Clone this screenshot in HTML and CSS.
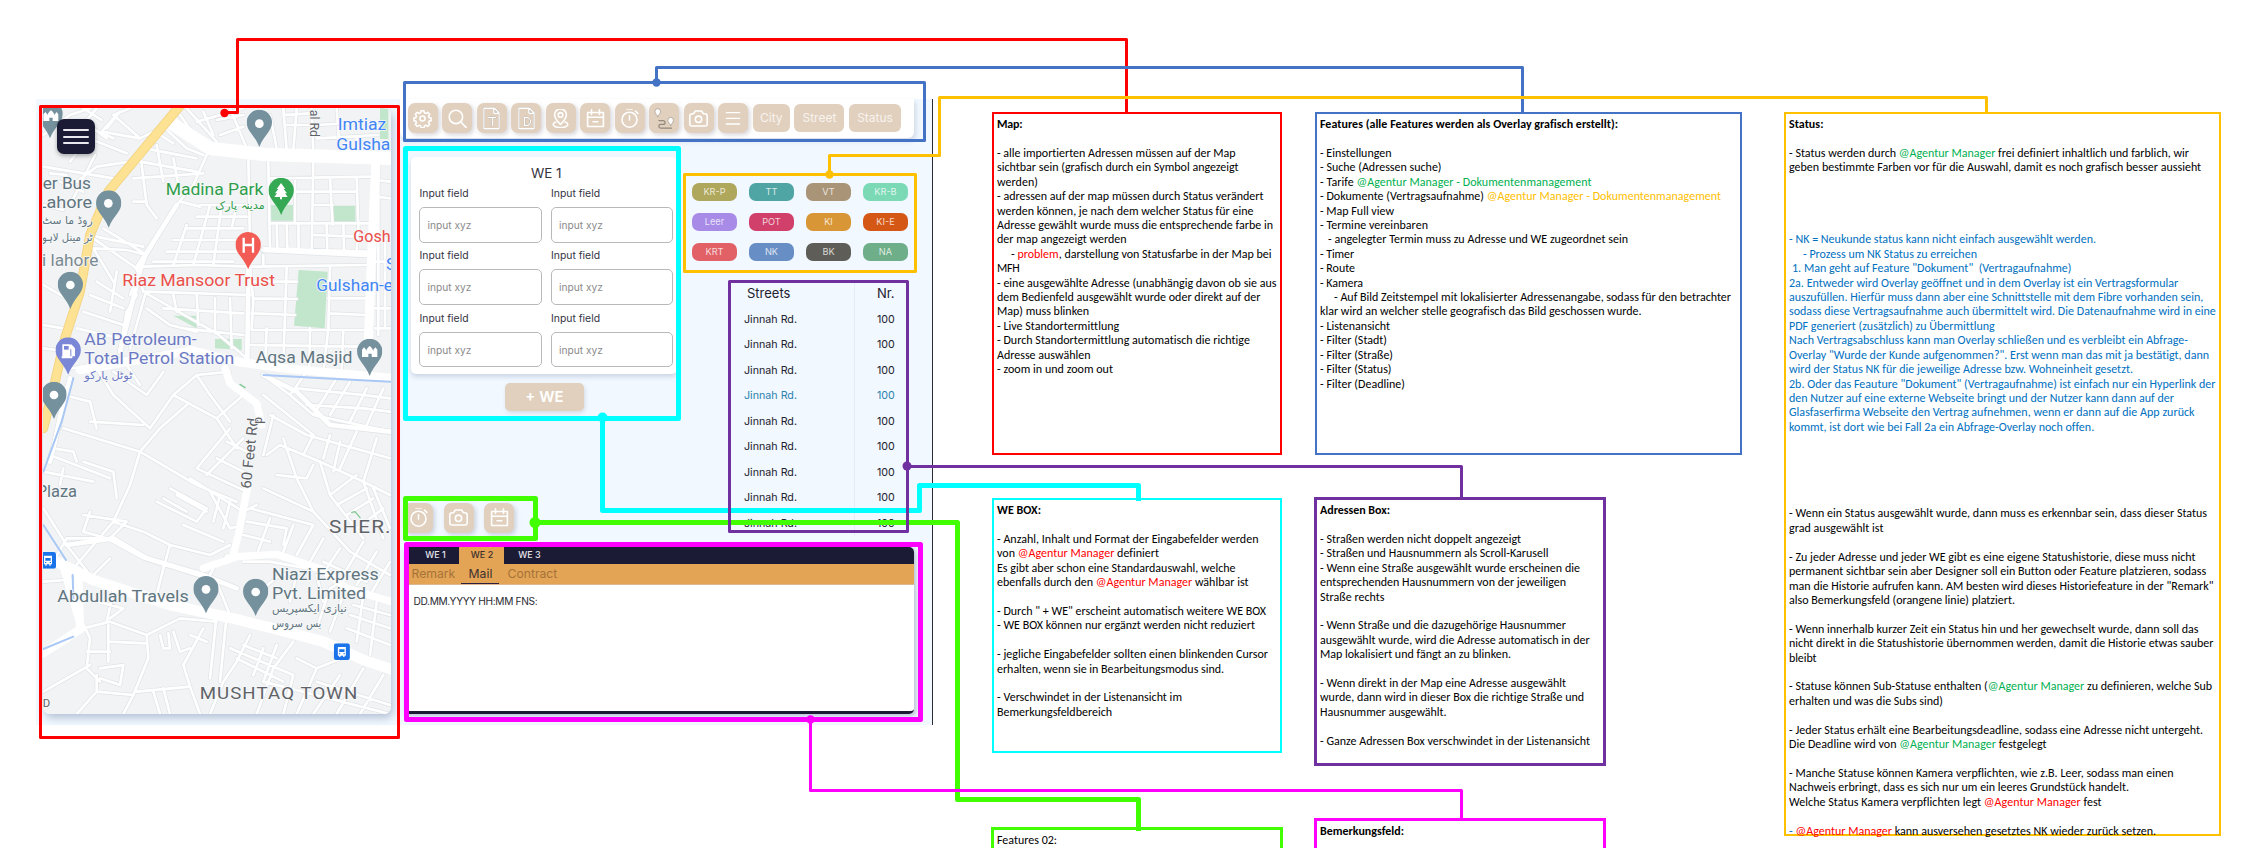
FILE: index.html
```html
<!DOCTYPE html>
<html lang="de">
<head>
<meta charset="utf-8">
<title>Bedienfeld – Anmerkungen</title>
<link rel="stylesheet" href="styles.css">
</head>
<body>
<svg class="defs" width="0" height="0" aria-hidden="true">
  <symbol id="i-gear" viewBox="0 0 24 24"><circle cx="12" cy="12" r="3.2"/><path d="M10.200 2.200h3.600l.6 2.700 1.800.8 2.400-1.500 2.500 2.500-1.500 2.400.8 1.800 2.500.6v3.200l-2.500.6-.8 1.800 1.500 2.400-2.500 2.500-2.400-1.500-1.800.8-.6 2.500h-3.600l-.6-2.500-1.800-.8-2.400 1.500-2.500-2.500 1.500-2.400-.8-1.800-2.500-.6v-3.200l2.500-.6.8-1.800-1.500-2.400 2.500-2.500 2.400 1.500 1.800-.8z"/></symbol>
  <symbol id="i-search" viewBox="0 0 24 24"><circle cx="10" cy="10" r="8.500"/><path d="M16 16 23 23.500"/></symbol>
  <symbol id="i-docT" viewBox="0 0 18 24"><path d="M1 1h11l5 5v17H1zM11.500 1v5.500H17"/><path class="glyph" d="M6 11h7.500M9.800 11v8.500"/></symbol>
  <symbol id="i-docD" viewBox="0 0 18 24"><path d="M1 1h11l5 5v17H1zM11.500 1v5.500H17"/><path class="glyph" d="M7 11v8.500h2a4.200 4.200 0 0 0 0-8.500z"/></symbol>
  <symbol id="i-pin" viewBox="0 0 24 24"><path d="M12 19.500C7.500 15 4.500 11.500 4.500 7.300a7.500 7.500 0 0 1 15 0c0 4.200-3 7.700-7.500 12.200z"/><circle cx="12" cy="7.500" r="2.900"/><path d="M6 16.500C.5 18.500 2 23.500 12 23.500s11.500-5 6-7"/></symbol>
  <symbol id="i-cal" viewBox="0 0 24 24"><path d="M2 4.500h20v17.500H2zM2 10.500h20M7 1v6M17 1v6M9 16h6"/></symbol>
  <symbol id="i-timer" viewBox="0 0 24 24"><circle cx="12" cy="13.500" r="9.500"/><path d="M12 8.500v5.500M8.500 0h7M19.500 2.500l3 3"/></symbol>
  <symbol id="i-route" viewBox="0 0 24 24"><path class="ghost" d="M6 14.500h5a2.300 2.300 0 0 1 0 4.600H8a2.200 2.200 0 0 0 0 4.400h13"/><path class="solid" d="M4.500 9.500C2 6.500 1.200 5 1.200 3.500a3.300 3.300 0 0 1 6.600 0c0 1.500-.8 3-3.300 6zM20 20c-2.500-3-3.300-4.500-3.300-6a3.300 3.300 0 0 1 6.600 0c0 1.500-.8 3-3.300 6z"/></symbol>
  <symbol id="i-cam" viewBox="0 0 24 24"><path d="M8 2.500h8l2.200 3.500H20a3 3 0 0 1 3 3v10a2.500 2.500 0 0 1-2.500 2.500h-17A2.500 2.500 0 0 1 1 19V9a3 3 0 0 1 3-3h1.800z"/><circle cx="12" cy="13" r="4"/></symbol>
  <symbol id="i-menu" viewBox="0 0 24 24"><path d="M2 4h20M2 12.500h20M2 21h20"/></symbol>
  <symbol id="marker" viewBox="0 0 76 112"><path d="M38 0a38 38 0 0 1 38 38c0 27-24 38-38 74C24 76 0 65 0 38A38 38 0 0 1 38 0z"/></symbol>
  <symbol id="bus" viewBox="0 0 48 50"><rect width="48" height="50" rx="7" fill="#1a73e8"/><path fill="#fff" d="M12 11h24v26h-4v4h-4v-4h-8v4h-4v-4h-4z"/><path fill="#1a73e8" d="M16 18h16v8H16zM15 30h4v3h-4zM29 30h4v3h-4z"/></symbol>
</svg>

<main class="board">
  <section class="app">
    <div class="map">
      <svg class="map-svg" viewBox="39 39 1043 1818" preserveAspectRatio="none">
        <defs>
          <g id="minor">
            <path d="M40 120 120 60 180 40M200 40 150 100M260 60 215 110M215 110 330 130 400 95M120 200 175 130 290 175M140 260 200 215 300 200M60 235 110 240M40 330 100 345M195 180 120 330M90 260 160 290M40 215 250 250"/>
            <path d="M330 130 250 60 300 40M180 100 250 130M230 100 270 50M160 40 215 75"/>
            <path d="M400 95 470 160 520 180M375 110 430 145M345 160 500 190M330 200 500 230M330 170 350 330 380 370M380 150 400 260M430 190 445 270M310 320 350 320M310 250 520 235M530 180 490 270 440 330 350 480 300 600"/>
            <path d="M450 60 500 130M470 40 560 140M520 50 550 120M500 80 640 40M560 75 640 60M600 40 650 160M570 120 640 95M720 60 740 160M760 40 770 165M800 40 790 165M845 40 850 180M760 60 840 55M765 90 845 90M860 90 1045 80M860 130 1045 120M920 40 930 180M980 130 985 180"/>
            <path d="M655 190 660 460 655 520 650 800M715 200 718 380 720 460M850 190 845 470M715 250 1020 245M980 250 985 400 980 465M900 250 908 390M795 250 795 380M720 290 850 290M850 290 980 290M850 330 908 330M720 385 1020 385M740 385 742 460M770 385 772 460M805 385 806 465M850 420 980 425M890 390 892 460M940 385 942 465M340 515 500 510 660 515 1010 510M700 460 1010 470"/>
            <path d="M510 330 650 330M500 365 650 365M470 400 640 400M430 435 620 435M410 470 620 470M370 500 610 500M575 330 550 510M540 330 490 510M620 330 605 400M470 390 430 510M450 320 510 335"/>
            <path d="M660 515 670 620 665 700M770 515 760 800M700 480 700 515M900 515 895 700 880 830M895 560 1010 565M895 610 1010 610M895 655 1010 660M895 705 1010 705M670 560 800 560M670 610 800 612M665 655 795 660M665 705 1010 705M660 750 1000 755M710 700 705 810M840 700 838 820M940 705 935 820"/>
            <path d="M350 480 290 465 190 460 250 560M200 425 340 455M220 400 350 480M190 430 320 520M320 520 340 590 560 715 650 790M345 590 660 600M500 600 505 690M430 600 440 650M400 640 640 655M460 700 640 720M555 610 555 715M600 610 605 760M350 640 420 690 500 710M320 600 290 650 270 760M345 600 300 760M280 610 200 560M260 530 240 650M180 600 280 640M160 650 280 690M140 700 270 730"/>
            <path d="M190 100 230 130M1080 260 1040 255M1080 310 1040 305M1080 430 1040 430M1080 500 1040 500M1080 640 1035 640M1080 700 1035 700M1045 200 1045 720M1065 430 1065 700"/>
            <path d="M40 570 110 610M40 690 100 700M40 760 80 765M120 820 220 810 230 780M120 850 100 900 60 1100M100 900 180 920 200 1000M200 820 250 900 360 1000M250 830 350 900 400 830M290 810 330 870M360 1000 430 900 500 840 600 830M430 900 560 970 620 1060M500 840 540 900 600 980M560 970 640 900M470 930 390 1000 330 1070M100 1000 330 1070 500 1170 620 1220M180 980 340 990"/>
            <path d="M700 840 780 900 850 960 1080 1010M780 900 830 830M850 960 920 850M900 960 960 860M960 980 1010 880M1010 990 1060 880M700 900 850 1020M720 960 830 1020 1080 1090M800 880 1000 900 1080 910M830 930 1000 940 1080 950"/>
            <path d="M500 1120 600 1000M530 1140 640 1030M500 1120 650 1190M480 1150 640 1250 680 1230M560 1090 660 1140M590 1040 670 1080M540 1190 600 1300 640 1290M570 1200 550 1280M600 1220 580 1300"/>
            <path d="M710 1080 750 1050 870 1100 1000 1160 1080 1200M740 1140 830 1150 850 1110M760 1030 800 1150 850 1250 960 1370M700 1180 850 1250M870 1100 900 1200 1000 1330M930 1040 910 1130M980 1010 930 1120M1040 1030 1000 1160M900 1200 980 1140M920 1230 1010 1180M950 1260 1030 1210M980 1300 1060 1240M1000 1160 1060 1330M1030 1180 1080 1300M730 960 700 1080M850 1020 820 1080M900 1020 880 1090"/>
            <path d="M660 1240 850 1290M650 1280 770 1300 760 1350M640 1320 720 1340M720 1270 680 1380M790 1290 760 1370M850 1290 800 1380M880 1330 840 1400M930 1360 890 1420M960 1370 1080 1440M1000 1340 940 1440M1040 1370 980 1470M1080 1400 1020 1500M880 1400 1010 1460"/>
            <path d="M60 1080 240 1150M70 1060 130 1070 140 1100M40 1130 190 1160M100 1120 90 1170M160 1100 250 1130 260 1210M330 1070 300 1170 250 1280 130 1420M160 1260 290 1280 240 1330M180 1250 160 1310 230 1330M110 1330 230 1330 340 1390 530 1450M40 1240 110 1350 180 1440M250 1280 340 1310 420 1350 400 1420 380 1500M380 1220 500 1280 530 1240 420 1180M400 1210 470 1250M440 1200 530 1250M420 1350 540 1380 600 1350M460 1290 580 1340M70 1400 110 1330"/>
            <path d="M180 1450 240 1390M520 1480 560 1400 620 1380M500 1430 560 1460 600 1560M640 1400 720 1400 830 1420M700 1480 750 1440 830 1430M800 1440 780 1520M860 1440 880 1520M560 1560 540 1750M590 1560 570 1760"/>
            <path d="M40 1460 110 1455M120 1500 180 1630 170 1720 210 1760M200 1520 280 1540 240 1570M250 1490 230 1580M160 1600 240 1580 350 1620 450 1570 560 1580M350 1620 355 1690 310 1800 280 1857M235 1590 235 1700M235 1640 350 1645M170 1670 240 1670M210 1720 280 1710 270 1770 210 1750M310 1800 200 1790 140 1857M200 1790 200 1740M320 1790 480 1775 460 1710 520 1600M390 1620 400 1660 420 1660 415 1615M430 1610 450 1670 480 1660M480 1620 530 1640M40 1790 180 1710"/>
            <path d="M600 1660 790 1740M620 1690 760 1760M640 1650 740 1690M660 1620 620 1700 580 1760 540 1857M700 1660 670 1740M740 1650 700 1760M790 1640 730 1720 680 1857M790 1740 760 1857M700 1760 1080 1857M800 1690 860 1720 960 1680M860 1720 800 1857M930 1740 850 1857M1000 1720 920 1857M1060 1740 990 1857M860 1760 1080 1830M480 1775 510 1857M400 1780 420 1857M370 1790 390 1857"/>
            <path d="M860 1600 900 1480 950 1450M900 1610 940 1500M960 1560 1080 1600M950 1600 1080 1650M970 1530 1080 1560M1000 1500 980 1640M1040 1520 1020 1680"/>
          </g>
          <g id="mid">
            <path d="M655 520 652 800M1010 480 700 465M340 490 270 770M440 330 320 520M150 820 300 790 500 765"/>
            <path d="M60 1100 120 850M110 1350 250 1330 350 1390 520 1440 620 1480M590 1385 760 1380M700 840 800 890 900 990 1080 1010"/>
          </g>
        </defs>
        <rect x="39" y="39" width="1043" height="1818" fill="#f1f3f4"/>
        <g fill="#c1e6cb">
          <path d="M717 330h78v47h-78zM908 332h68v50h-68zM806 525l87 5-9 170-92-8zM430 662h70v38zM555 732h80v33l-80-5zM1050 40h25v92h-25z"/>
        </g>
        <use href="#minor" class="road casing-minor"/>
        <use href="#mid" class="road casing-mid"/>
        <use href="#minor" class="road line-minor"/>
        <use href="#mid" class="road line-mid"/>
        <path class="road" stroke="#fff" stroke-width="40" d="M425 85 540 160 700 178 1090 190"/>
        <path class="road" stroke="#fff" stroke-width="27" d="M1038 190 1025 480 1015 740"/>
        <path class="road" stroke="#fff" stroke-width="26" d="M480 765 620 800 780 822 1090 850M150 825 480 768"/>
        <path class="road" stroke="#fff" stroke-width="22" d="M585 820 600 865 680 925 695 990M652 1180 625 1320 608 1385M520 1420 620 1385 740 1378 880 1425 950 1480 1085 1520"/>
        <path class="road" stroke="#fff" stroke-width="32" d="M80 1400 190 1455 420 1530 600 1568 720 1598 880 1640 1000 1695 1090 1725"/>
        <path class="road" stroke="#fff" stroke-width="25" d="M100 1410 155 1600 40 1675M145 1450 150 1600"/>
        <path class="road" stroke="#a9c8f5" stroke-width="6" d="M130 850 95 980 40 1130M40 1290 108 1395M128 1440 130 1510M40 1662 130 1625M700 840 880 850 1082 860"/>
        <path class="road" stroke="#f3d27e" stroke-width="29" d="M460 20 235 290 180 420 150 590 105 730 75 860 40 1000"/>
        <path class="road" stroke="#fde293" stroke-width="24" d="M460 20 235 290 180 420 150 590 105 730 75 860 40 1000"/>
        <path class="road" stroke="#81c995" stroke-width="4" d="M630 868 645 878M965 1252 975 1250 990 1268"/>

        <g fill="#76919e">
          <use href="#marker" x="20" y="18" width="80" height="112"/>
          <use href="#marker" x="650" y="44" width="76" height="112"/>
          <use href="#marker" x="198" y="286" width="76" height="112"/>
          <use href="#marker" x="83" y="530" width="76" height="112"/>
          <use href="#marker" x="34" y="860" width="76" height="112"/>
          <use href="#marker" x="981" y="731" width="76" height="112"/>
          <use href="#marker" x="490" y="1443" width="76" height="112"/>
          <use href="#marker" x="639" y="1451" width="76" height="112"/>
        </g>
        <g fill="#fff">
          <circle cx="688" cy="86" r="13"/><circle cx="235" cy="325" r="13"/><circle cx="121" cy="570" r="13"/><circle cx="72" cy="900" r="13"/><circle cx="528" cy="1483" r="13"/><circle cx="677" cy="1491" r="13"/>
          <path d="M996 786v-22l6-7 6 7v5c2-8 6-12 11-16 5 4 9 8 11 16v-5l6-7 6 7v22h-17v-10h-10v10zM40 78V58l6-7 6 7v4c2-8 6-12 11-16 5 4 9 8 11 16v-4l6-7 5 7v20H68V68H58v10z"/>
        </g>
        <use href="#marker" x="715" y="248" width="77" height="112" fill="#34a853"/>
        <path fill="#fff" d="M753 264l13 18h-5l10 13h-6l8 11h-17v7h-6v-7h-17l8-11h-6l10-13h-5z"/>
        <use href="#marker" x="616" y="411" width="77" height="112" fill="#f25c54"/>
        <path fill="none" stroke="#fff" stroke-width="7" d="M641 428v45M669 428v45M641 450h28"/>
        <use href="#marker" x="76" y="727" width="77" height="112" fill="#7a86d6"/>
        <path fill="#fff" d="M97 748h24v36h3V764l-4-5v-8l4-3 11 12v24h-8v6H95v-6h2z"/><path fill="#7a86d6" d="M102 753h14v11h-14z"/>
        <use href="#bus" x="30" y="1371" width="48" height="50"/>
        <use href="#bus" x="911" y="1645" width="49" height="50"/>

        <g class="lbl">
          <g fill="#4285f4">
            <text x="923" y="106" textLength="146" lengthAdjust="spacingAndGlyphs">Imtiaz</text>
            <text x="919" y="164" textLength="162" lengthAdjust="spacingAndGlyphs">Gulsha</text>
            <text x="1068" y="526">S</text>
            <text x="859" y="587" textLength="230" lengthAdjust="spacingAndGlyphs">Gulshan-e</text>
          </g>
          <g fill="#2f9e4c"><text x="407" y="300" textLength="293" lengthAdjust="spacingAndGlyphs">Madina Park</text><text class="ar" x="556" y="342" textLength="148" lengthAdjust="spacingAndGlyphs">مدینہ پارک</text></g>
          <g fill="#ea4f4a"><text x="277" y="574" textLength="458" lengthAdjust="spacingAndGlyphs">Riaz Mansoor Trust</text><text x="970" y="441" textLength="112" lengthAdjust="spacingAndGlyphs">Gosh</text></g>
          <g fill="#60757f">
            <text x="38" y="281" textLength="145" lengthAdjust="spacingAndGlyphs">er Bus</text>
            <text x="20" y="338" textLength="166" lengthAdjust="spacingAndGlyphs">Lahore</text>
            <text class="ar" x="36" y="388" textLength="152" lengthAdjust="spacingAndGlyphs">روڈ ما سٹ</text>
            <text class="ar" x="36" y="438" textLength="152" lengthAdjust="spacingAndGlyphs">ٹر مینل لاہو</text>
            <text x="36" y="513" textLength="169" lengthAdjust="spacingAndGlyphs" fill="#7b8a92">i lahore</text>
            <text x="677" y="803" textLength="290" lengthAdjust="spacingAndGlyphs">Aqsa Masjid</text>
            <text x="20" y="1247" textLength="121" lengthAdjust="spacingAndGlyphs" transform="translate(0 -40)">Plaza</text>
            <text x="82" y="1520" textLength="394" lengthAdjust="spacingAndGlyphs">Abdullah Travels</text>
            <text x="726" y="1454" textLength="320" lengthAdjust="spacingAndGlyphs">Niazi Express</text>
            <text x="726" y="1512" textLength="282" lengthAdjust="spacingAndGlyphs">Pvt. Limited</text>
            <text class="ar" x="726" y="1552" textLength="224" lengthAdjust="spacingAndGlyphs">نیازی ایکسپریس</text>
            <text class="ar" x="726" y="1596" textLength="148" lengthAdjust="spacingAndGlyphs">بس سروس</text>
          </g>
          <g fill="#6b78c4">
            <text x="163" y="751" textLength="337" lengthAdjust="spacingAndGlyphs">AB Petroleum-</text>
            <text x="163" y="808" textLength="450" lengthAdjust="spacingAndGlyphs">Total Petrol Station</text>
            <text class="ar" x="163" y="852" textLength="144" lengthAdjust="spacingAndGlyphs">ٹوٹل پارکو</text>
          </g>
          <g fill="#5f6368">
            <text class="area" x="897" y="1313" textLength="188" lengthAdjust="spacingAndGlyphs">SHER.</text>
            <text class="area area-sm" x="509" y="1812" textLength="476" lengthAdjust="spacingAndGlyphs">MUSHTAQ TOWN</text>
            <text class="tiny" x="38" y="1836">D</text>
            <text class="rd" transform="translate(662 1182) rotate(-84)" textLength="212" lengthAdjust="spacingAndGlyphs">60 Feet Rd</text>
            <text class="rd rd-sm" transform="translate(841 44) rotate(90)" textLength="82" lengthAdjust="spacingAndGlyphs">al Rd</text>
            <text class="rd rd-sm" transform="translate(676 966) rotate(90)">d</text>
          </g>
        </g>
      </svg>
      <button class="burger"><i></i><i></i><i></i></button>
    </div>

    <div class="main">
      <div class="toolbar">
        <span class="tb"><svg class="ic"><use href="#i-gear"/></svg></span>
        <span class="tb"><svg class="ic"><use href="#i-search"/></svg></span>
        <span class="tb"><svg class="ic doc"><use href="#i-docT"/></svg></span>
        <span class="tb"><svg class="ic doc"><use href="#i-docD"/></svg></span>
        <span class="tb"><svg class="ic"><use href="#i-pin"/></svg></span>
        <span class="tb"><svg class="ic"><use href="#i-cal"/></svg></span>
        <span class="tb"><svg class="ic"><use href="#i-timer"/></svg></span>
        <span class="tb"><svg class="ic route"><use href="#i-route"/></svg></span>
        <span class="tb"><svg class="ic"><use href="#i-cam"/></svg></span>
        <span class="tb"><svg class="ic small"><use href="#i-menu"/></svg></span>
        <span class="filter f-city">City</span><span class="filter f-street">Street</span><span class="filter f-status">Status</span>
      </div>
      <div class="middle">
        <div class="left">
          <div class="card">
            <h2>WE 1</h2>
            <div class="fields">
              <label>Input field<span>input xyz</span></label><label>Input field<span>input xyz</span></label>
              <label>Input field<span>input xyz</span></label><label>Input field<span>input xyz</span></label>
              <label>Input field<span>input xyz</span></label><label>Input field<span>input xyz</span></label>
            </div>
          </div>
          <span class="add">+ WE</span>
          <div class="quick">
            <span class="tb"><svg class="ic"><use href="#i-timer"/></svg></span>
            <span class="tb"><svg class="ic"><use href="#i-cam"/></svg></span>
            <span class="tb"><svg class="ic"><use href="#i-cal"/></svg></span>
          </div>
        </div>
        <div class="right">
          <div class="pills">
            <span class="krp">KR-P</span><span class="tt">TT</span><span class="vt">VT</span><span class="krb">KR-B</span>
            <span class="leer">Leer</span><span class="pot">POT</span><span class="ki">KI</span><span class="kie">KI-E</span>
            <span class="krt">KRT</span><span class="nk">NK</span><span class="bk">BK</span><span class="na">NA</span>
          </div>
          <div class="streets">
            <b>Streets</b><b>Nr.</b>
            <span>Jinnah Rd.</span><span>100</span>
            <span>Jinnah Rd.</span><span>100</span>
            <span>Jinnah Rd.</span><span>100</span>
            <span class="on">Jinnah Rd.</span><span class="on">100</span>
            <span>Jinnah Rd.</span><span>100</span>
            <span>Jinnah Rd.</span><span>100</span>
            <span>Jinnah Rd.</span><span>100</span>
            <span>Jinnah Rd.</span><span>100</span>
            <span>Jinnah Rd.</span><span>100</span>
          </div>
        </div>
      </div>
      <div class="remark">
        <div class="tabs"><span>WE 1</span><span class="on">WE 2</span><span>WE 3</span></div>
        <div class="subtabs"><span class="s1">Remark</span><span class="s2 on">Mail</span><span class="s3">Contract</span></div>
        <div class="entry">DD.MM.YYYY HH:MM FNS:</div>
      </div>
    </div>
  </section>

  <article class="note n-map">
    <p data-w="25.500"><b>Map:</b></p><p></p>
    <p data-w="238.500">- alle importierten Adressen müssen auf der Map</p>
    <p data-w="241.500">sichtbar sein (grafisch durch ein Symbol angezeigt</p>
    <p data-w="41">werden)</p>
    <p data-w="266.500">- adressen auf der map müssen durch Status verändert</p>
    <p data-w="256.500">werden können, je nach dem welcher Status für eine</p>
    <p data-w="276">Adresse gewählt wurde muss die entsprechende farbe in</p>
    <p data-w="129.500">der map angezeigt werden</p>
    <p class="in" data-w="260.500">- <em class="r">problem</em>, darstellung von Statusfarbe in der Map bei</p>
    <p data-w="22.500">MFH</p>
    <p data-w="279.500">- eine ausgewählte Adresse (unabhängig davon ob sie aus</p>
    <p data-w="263.500">dem Bedienfeld ausgewählt wurde oder direkt auf der</p>
    <p data-w="92">Map) muss blinken</p>
    <p data-w="122">- Live Standortermittlung</p>
    <p data-w="252.500">- Durch Standortermittlung automatisch die richtige</p>
    <p data-w="93.500">Adresse auswählen</p>
    <p data-w="116">- zoom in und zoom out</p>
  </article>

  <article class="note n-features">
    <p data-w="298"><b>Features (alle Features werden als Overlay grafisch erstellt):</b></p><p></p>
    <p data-w="71.500">- Einstellungen</p>
    <p data-w="121.500">- Suche (Adressen suche)</p>
    <p data-w="271.500">- Tarife <em class="g">@Agentur Manager - Dokumentenmanagement</em></p>
    <p data-w="401">- Dokumente (Vertragsaufnahme) <em class="y">@Agentur Manager - Dokumentenmanagement</em></p>
    <p data-w="74">- Map Full view</p>
    <p data-w="108">- Termine vereinbaren</p>
    <p class="in-s" data-w="300">- angelegter Termin muss zu Adresse und WE zugeordnet sein</p>
    <p data-w="34">- Timer</p>
    <p data-w="35">- Route</p>
    <p data-w="43">- Kamera</p>
    <p class="in" data-w="397">- Auf Bild Zeitstempel mit lokalisierter Adressenangabe, sodass für den betrachter</p>
    <p data-w="321.500">klar wird an welcher stelle geografisch das Bild geschossen wurde.</p>
    <p data-w="70">- Listenansicht</p>
    <p data-w="67">- Filter (Stadt)</p>
    <p data-w="73">- Filter (Straße)</p>
    <p data-w="71.500">- Filter (Status)</p>
    <p data-w="85">- Filter (Deadline)</p>
  </article>

  <article class="note n-we">
    <p data-w="44"><b>WE BOX:</b></p><p></p>
    <p data-w="261.500">- Anzahl, Inhalt und Format der Eingabefelder werden</p>
    <p data-w="162">von <em class="r">@Agentur Manager</em> definiert</p>
    <p data-w="238.500">Es gibt aber schon eine Standardauswahl, welche</p>
    <p data-w="251.500">ebenfalls durch den <em class="r">@Agentur Manager</em> wählbar ist</p><p></p>
    <p data-w="269">- Durch " + WE" erscheint automatisch weitere WE BOX</p>
    <p data-w="258">- WE BOX können nur ergänzt werden nicht reduziert</p><p></p>
    <p data-w="271">- jegliche Eingabefelder sollten einen blinkenden Cursor</p>
    <p data-w="227">erhalten, wenn sie in Bearbeitungsmodus sind.</p><p></p>
    <p data-w="185">- Verschwindet in der Listenansicht im</p>
    <p data-w="115">Bemerkungsfeldbereich</p>
  </article>

  <article class="note n-addr">
    <p data-w="70"><b>Adressen Box:</b></p><p></p>
    <p data-w="201">- Straßen werden nicht doppelt angezeigt</p>
    <p data-w="228.500">- Straßen und Hausnummern als Scroll-Karusell</p>
    <p data-w="260">- Wenn eine Straße ausgewählt wurde erscheinen die</p>
    <p data-w="246">entsprechenden Hausnummern von der jeweiligen</p>
    <p data-w="64.500">Straße rechts</p><p></p>
    <p data-w="246">- Wenn Straße und die dazugehörige Hausnummer</p>
    <p data-w="269.500">ausgewählt wurde, wird die Adresse automatisch in der</p>
    <p data-w="191">Map lokalisiert und fängt an zu blinken.</p><p></p>
    <p data-w="246">- Wenn direkt in der Map eine Adresse ausgewählt</p>
    <p data-w="264">wurde, dann wird in dieser Box die richtige Straße und</p>
    <p data-w="126.500">Hausnummer ausgewählt.</p><p></p>
    <p data-w="270">- Ganze Adressen Box verschwindet in der Listenansicht</p>
  </article>

  <article class="note n-status">
    <p data-w="34.500"><b>Status:</b></p><p></p>
    <p data-w="400">- Status werden durch <em class="g">@Agentur Manager</em> frei definiert inhaltlich und farblich, wir</p>
    <p data-w="412">geben bestimmte Farben vor für die Auswahl, damit es noch grafisch besser aussieht</p>
    <p></p><p></p><p></p><p></p>
    <div class="blue">
      <p data-w="307">- NK = Neukunde status kann nicht einfach ausgewählt werden.</p>
      <p class="in" data-w="174">- Prozess um NK Status zu erreichen</p>
      <p class="in-1" data-w="279.500">1. Man geht auf Feature "Dokument"&nbsp; (Vertragaufnahme)</p>
      <p data-w="389">2a. Entweder wird Overlay geöffnet und in dem Overlay ist ein Vertragsformular</p>
      <p data-w="414">auszufüllen. Hierfür muss dann aber eine Schnittstelle mit dem Fibre vorhanden sein,</p>
      <p data-w="426.500">sodass diese Vertragsaufnahme auch übermittelt wird. Die Datenaufnahme wird in eine</p>
      <p data-w="205.500">PDF generiert (zusätzlich) zu Übermittlung</p>
      <p data-w="399">Nach Vertragsabschluss kann man Overlay schließen und es verbleibt ein Abfrage-</p>
      <p data-w="420">Overlay "Wurde der Kunde aufgenommen?". Erst wenn man das mit ja bestätigt, dann</p>
      <p data-w="344">wird der Status NK für die jeweilige Adresse bzw. Wohneinheit gesetzt.</p>
      <p data-w="426.500">2b. Oder das Feauture "Dokument" (Vertragaufnahme) ist einfach nur ein Hyperlink der</p>
      <p data-w="385">den Nutzer auf eine externe Webseite bringt und der Nutzer kann dann auf der</p>
      <p data-w="405.500">Glasfaserfirma Webseite den Vertrag aufnehmen, wenn er dann auf die App zurück</p>
      <p data-w="305">kommt, ist dort wie bei Fall 2a ein Abfrage-Overlay noch offen.</p>
    </div>
    <p></p><p></p><p></p><p></p><p></p>
    <p data-w="418">- Wenn ein Status ausgewählt wurde, dann muss es erkennbar sein, dass dieser Status</p>
    <p data-w="94.500">grad ausgewählt ist</p><p></p>
    <p data-w="406.500">- Zu jeder Adresse und jeder WE gibt es eine eigene Statushistorie, diese muss nicht</p>
    <p data-w="417">permanent sichtbar sein aber Designer soll ein Button oder Feature platzieren, sodass</p>
    <p data-w="424.500">man die Historie aufrufen kann. AM besten wird dieses Historiefeature in der "Remark"</p>
    <p data-w="226">also Bemerkungsfeld (orangene linie) platziert.</p><p></p>
    <p data-w="409.500">- Wenn innerhalb kurzer Zeit ein Status hin und her gewechselt wurde, dann soll das</p>
    <p data-w="424.500">nicht direkt in die Statushistorie übernommen werden, damit die Historie etwas sauber</p>
    <p data-w="27.500">bleibt</p><p></p>
    <p data-w="423">- Statuse können Sub-Statuse enthalten (<em class="g">@Agentur Manager</em> zu definieren, welche Sub</p>
    <p data-w="154">erhalten und was die Subs sind)</p><p></p>
    <p data-w="414">- Jeder Status erhält eine Bearbeitungsdeadline, sodass eine Adresse nicht untergeht.</p>
    <p data-w="257.500">Die Deadline wird von <em class="g">@Agentur Manager</em> festgelegt</p><p></p>
    <p data-w="384.500">- Manche Statuse können Kamera verpflichten, wie z.B. Leer, sodass man einen</p>
    <p data-w="340">Nachweis erbringt, dass es sich nur um ein leeres Grundstück handelt.</p>
    <p data-w="312.500">Welche Status Kamera verpflichten legt <em class="r">@Agentur Manager</em> fest</p><p></p>
    <p data-w="367"><em class="bl">-</em> <em class="r">@Agentur Manager</em> kann ausversehen gesetztes NK wieder zurück setzen.</p>
  </article>

  <article class="note n-f2"><p data-w="60">Features 02:</p></article>
  <article class="note n-bem"><p data-w="84"><b>Bemerkungsfeld:</b></p></article>

  <svg class="wires" viewBox="0 0 2243 848">
    <g fill="none" stroke-linejoin="round">
      <g stroke="#00ffff" stroke-width="5"><rect x="405.500" y="148.500" width="273" height="270"/><path d="M602.500 417V510.500H919.500V485.500H1138.500V501"/></g>
      <g stroke="#7030a0" stroke-width="3"><rect x="729.500" y="281.500" width="178" height="250"/><path d="M907 466.500H1461.500V498"/></g>
      <g stroke="#41ff00" stroke-width="5"><rect x="405.500" y="498.500" width="130" height="40"/><path d="M535 522.500H957.500V799.500H1138.500V831"/></g>
      <path stroke="#7030a0" stroke-width="3" d="M729.500 515V530M907.500 515V530"/>
      <g stroke="#ff0000" stroke-width="3"><rect x="40.500" y="106.500" width="358" height="631"/><path d="M224 112.500H237.500V39.500H1126.500V112"/></g>
      <g stroke="#4472c4" stroke-width="3"><rect x="404.500" y="82.500" width="520" height="58"/><path d="M656.500 82V67.500H1522.500V112"/></g>
      <g stroke="#ffc000" stroke-width="3"><rect x="684.500" y="174.500" width="231" height="97"/><path d="M829.500 174V155.500H939.500V97.500H1986.500V114"/></g>
      <g stroke="#ff00ff" stroke-width="5"><rect x="406.500" y="544.500" width="514" height="175"/><path stroke-width="3" d="M810.500 720V790.500H1461.500V820"/></g>
    </g>
    <circle cx="602.500" cy="417.500" r="5" fill="#00ffff"/>
    <circle cx="907" cy="466" r="4.500" fill="#7030a0"/>
    <circle cx="535" cy="522.500" r="5.500" fill="#41ff00"/>
    <circle cx="224.500" cy="113" r="4.200" fill="#ff0000"/>
    <circle cx="656.500" cy="82.500" r="4.200" fill="#4472c4"/>
    <circle cx="829.500" cy="174.500" r="4.200" fill="#ffc000"/>
    <circle cx="810.500" cy="719.500" r="4.200" fill="#ff00ff"/>
  </svg>
</main>
<script src="fit.js"></script>
</body>
</html>
```
FILE: styles.css
```css
* { box-sizing: border-box; }
body { margin: 0; background: #fff; overflow: hidden; }
.defs { position: absolute; }
.board { position: relative; width: 2243px; height: 848px; overflow: hidden; font-family: Inter, "Noto Sans", sans-serif; }

/* app mock-up */
.app { position: absolute; left: 36px; top: 99px; width: 897px; height: 626px; display: flex; background: #f1f8ff; border-right: 1px solid #2b2d3a; }
.map { position: relative; margin: 9px 0 0 7px; width: 347.700px; height: 606px; border-radius: 0 7px 7px 7px; box-shadow: 2px 4px 9px rgba(90,110,150,.4); }
.map-svg { display: block; width: 100%; height: 100%; border-radius: inherit; }
.road { fill: none; stroke-linecap: round; stroke-linejoin: round; }
.casing-minor { stroke: #e0e3e6; stroke-width: 12; }
.casing-mid { stroke: #e0e3e6; stroke-width: 18; }
.line-minor { stroke: #fff; stroke-width: 8; }
.line-mid { stroke: #fff; stroke-width: 14; }
.lbl text { font-family: Roboto, sans-serif; font-size: 52px; paint-order: stroke; stroke: #f7f8f9; stroke-width: 5px; stroke-linejoin: round; }
.lbl .ar { font-family: "DejaVu Sans", sans-serif; font-size: 33px; }
.lbl .area { font-size: 57px; letter-spacing: 3px; }
.lbl .area-sm { font-size: 51px; }
.lbl .rd { font-size: 44px; }
.lbl .rd-sm { font-size: 36px; }
.lbl .tiny { font-size: 34px; }
.burger { position: absolute; left: 14px; top: 11px; width: 38px; height: 35px; padding: 0 6px; border: 0; border-radius: 7px; background: #1c1b35; box-shadow: 0 2px 4px rgba(0,0,0,.3); display: flex; flex-direction: column; justify-content: center; gap: 4.700px; }
.burger i { height: 2px; background: #e8e8ee; border-radius: 1px; }

.main { width: 532px; margin-left: 9.300px; }
.toolbar { display: flex; align-items: center; gap: 4.600px; width: 514.500px; height: 39px; padding: 0 0 1px 8px; background: #fff; border-radius: 0 0 6px 6px; box-shadow: 2px 3px 5px rgba(110,130,160,.25); }
.tb { flex: none; width: 29.900px; height: 30px; display: flex; align-items: center; justify-content: center; border-radius: 7px; background: #e1d0be; box-shadow: 2px 2px 4px rgba(110,110,130,.28); }
.ic { width: 19px; height: 19px; fill: none; stroke: #fff; stroke-width: 2; stroke-linecap: round; stroke-linejoin: round; overflow: visible; }
.ic.doc { width: 17px; height: 23px; stroke-width: 1.700; filter: drop-shadow(0 0 .7px #5f574e); }
.glyph { stroke-width: 1.500; }
.ic.small { width: 16px; height: 16px; }
.ic.route { width: 20px; height: 21px; stroke-width: 1; }
.ghost { stroke: #93887d; stroke-width: 1.500; }
.solid { fill: #fff; stroke: #93887d; stroke-width: .7; }
.filter { flex: none; height: 28px; line-height: 28px; border-radius: 6px; background: #e1d0be; color: #f8f3ee; text-align: center; font-size: 12px; }
.f-city { width: 37px; }
.f-street { width: 50px; }
.f-status { width: 52px; }

.middle { display: flex; height: 409px; }
.left { width: 292px; padding: 19px 15px 0 11.500px; display: flex; flex-direction: column; }
.card { height: 217px; padding: 5px 4px 0 8px; border-radius: 5px; background: #fff; box-shadow: 0 3px 5px rgba(110,130,160,.28); }
.card h2 { margin: 0; text-align: center; font-size: 13.500px; line-height: 22px; font-weight: 400; color: #34343f; }
.fields { display: grid; grid-template-columns: 122.500px 122.500px; column-gap: 9px; padding-top: 3px; }
.fields label { height: 62.300px; font-size: 10.400px; line-height: 14px; color: #33333f; }
.fields span { display: block; height: 35.500px; margin-top: 6px; padding-left: 7px; border: 1px solid #b9b9bb; border-radius: 5px; line-height: 34px; font-size: 10.200px; color: #8b8b8b; }
.add { margin: 8.700px 0 0 93.500px; width: 79px; height: 28.500px; line-height: 28.500px; border-radius: 5px; background: #e1d0be; color: #fff; text-align: center; font-size: 15px; font-weight: 600; box-shadow: 1px 2px 4px rgba(110,110,130,.2); }
.quick { display: flex; gap: 10.600px; margin: 91.500px 0 0 -8px; }
.right { width: 232px; }
.pills { display: grid; grid-template-columns: repeat(4, 45px); gap: 12px; padding-top: 45px; }
.pills span { height: 18px; line-height: 18px; border-radius: 7px; text-align: center; font-size: 9.200px; color: rgba(255,255,255,.78); }
.krp { background: #afa75c; } .tt { background: #4fa5a3; } .vt { background: #a99478; } .krb { background: #7bd9b6; }
.leer { background: #a78be6; } .pot { background: #d0406b; } .ki { background: #d99637; } .kie { background: #d55716; }
.krt { background: #e16167; } .nk { background: #688ec6; } .bk { background: #5e5d57; } .na { background: #6eae88; }
.streets { display: grid; grid-template-columns: 110px 70px; grid-auto-rows: 25.500px; margin: 20px 0 0 52px; font-size: 10.700px; line-height: 25.500px; color: #22222e; }
.streets > :nth-child(even) { border-left: 1px solid #e3edf7; padding-left: 22px; }
.streets b { font-weight: 400; font-size: 13px; }
.streets b:first-child { padding-left: 3px; }
.streets .on { color: #2d82ad; }

.remark { width: 510px; height: 167px; margin-left: 4.500px; border-radius: 0 5px 5px 0; border-bottom: 3px solid #1c1b35; background: #fff; box-shadow: 2px 2px 5px rgba(90,100,140,.4); font-size: 10px; }
.tabs { display: flex; height: 17px; padding-left: 10px; background: #1c1b35; border-radius: 0 5px 0 0; color: #e6e6ec; line-height: 16px; font-weight: 500; font-size: 9px; }
.tabs span { width: 45px; text-align: center; }
.tabs span:first-child { padding-right: 3px; }
.tabs .on { background: #e3a455; color: #3b3030; }
.tabs span:last-child { width: 50px; }
.subtabs { display: flex; height: 21px; background: #e3a455; border-bottom: 1px solid #d9b88f; color: #a5733a; font-size: 12.200px; line-height: 20px; }
.subtabs .s1 { width: 57px; padding-left: 7px; }
.subtabs .s2 { width: 38px; text-align: center; }
.subtabs .s3 { padding-left: 8px; }
.subtabs .on { color: #3c3032; border-bottom: 1.500px solid #2a2140; }
.entry { padding: 9px 0 0 9px; line-height: 14px; font-size: 10.200px; letter-spacing: -.35px; color: #2b2b33; }

/* annotation boxes */
.note { position: absolute; padding: 3px; border: 2px solid; background: #fff; font-family: Carlito, Calibri, Lato, sans-serif; font-size: 12px; line-height: 14.430px; }
.note p { margin: 0; height: 14.430px; width: max-content; white-space: pre; color: #000; }
.note em { font-style: normal; }
.note .r { color: #f00; } .note .g { color: #00b050; } .note .y { color: #ffc000; } .note .bl { color: #0070c0; }
.note .blue p { color: #0070c0; }
.note .in { margin-left: 14px; } .note .in-s { margin-left: 8px; } .note .in-1 { margin-left: 3px; }
.n-map { left: 992px; top: 112px; width: 290px; height: 343px; border-color: #f00; }
.n-features { left: 1315px; top: 112px; width: 427px; height: 343px; border-color: #4472c4; }
.n-we { left: 992px; top: 498px; width: 290px; height: 255px; border-color: #0ff; }
.n-addr { left: 1314px; top: 497px; width: 292px; height: 269px; border-width: 3px; border-color: #7030a0; }
.n-status { left: 1784px; top: 112px; width: 437px; height: 724px; border-color: #ffc000; }
.n-f2 { left: 991px; top: 827px; width: 292px; height: 60px; border-width: 3px; border-color: #41ff00; }
.n-bem { left: 1314px; top: 818px; width: 292px; height: 60px; border-width: 3px; border-color: #f0f; }
.wires { position: absolute; inset: 0; width: 2243px; height: 848px; }
```
FILE: fit.js
```js
// Tracks every annotation line to its set measure.
document.querySelectorAll('.note p[data-w]').forEach(function (p) {
  var gap = parseFloat(p.dataset.w) - p.getBoundingClientRect().width;
  p.style.letterSpacing = (gap / p.textContent.length) + 'px';
});
```
